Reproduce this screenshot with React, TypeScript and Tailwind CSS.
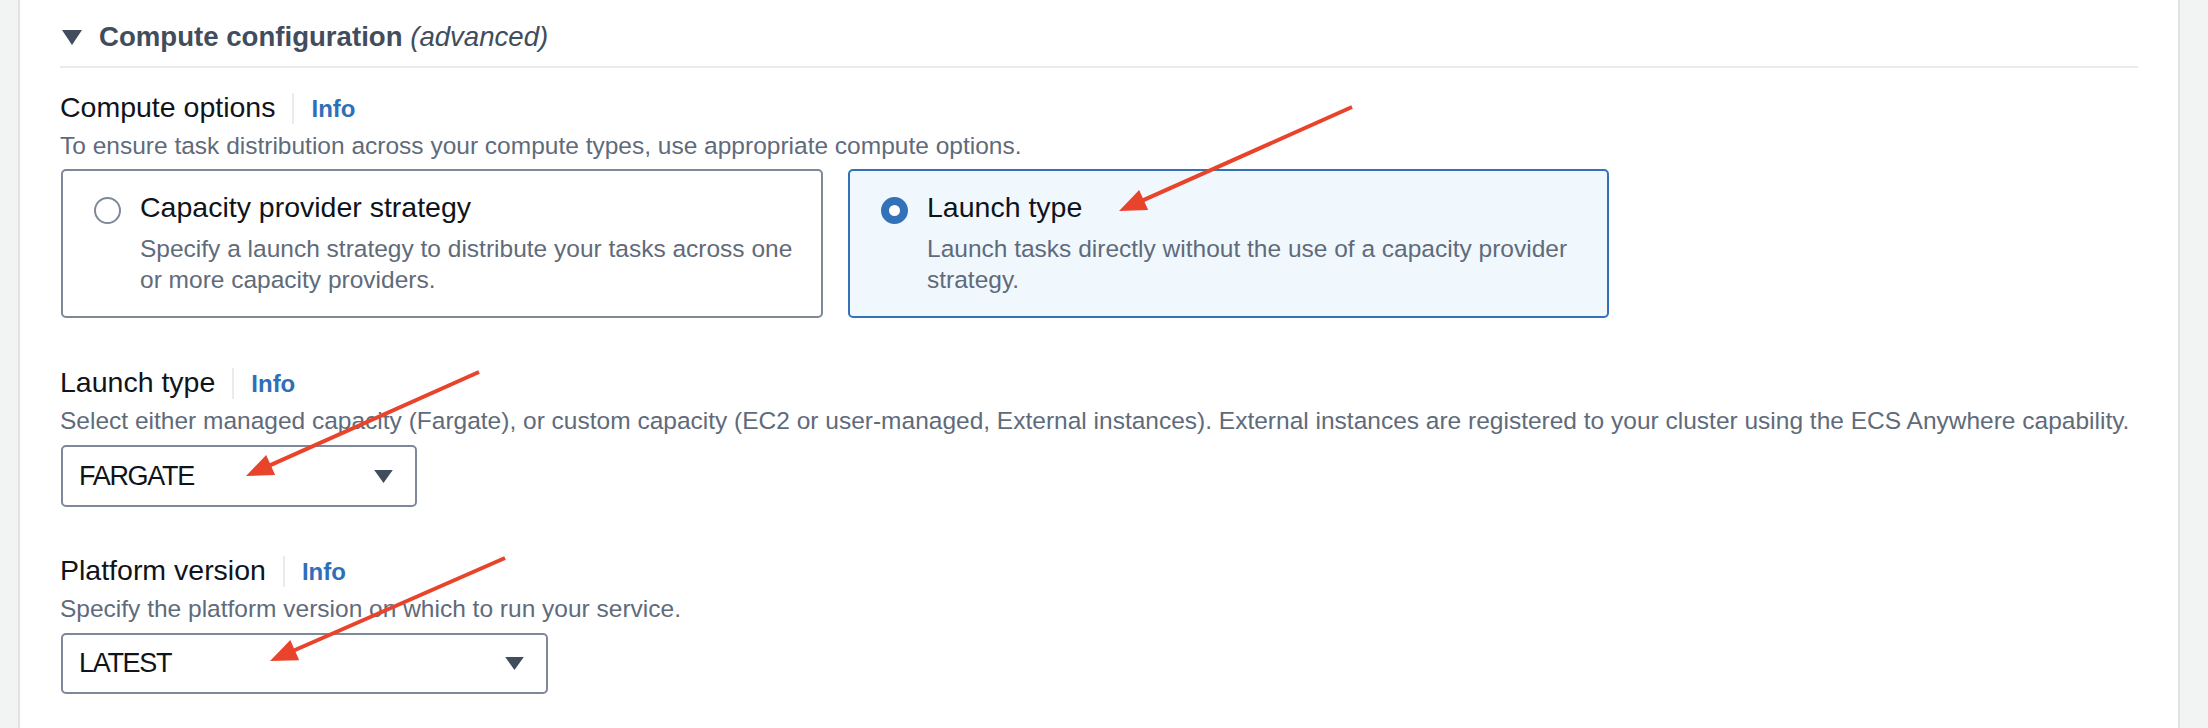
import React from 'react';

type Pt = [number, number];

// red annotation arrows drawn over the screenshot
const arrows: { from: Pt; to: Pt }[] = [
  { from: [1352, 107], to: [1119, 211] },
  { from: [479, 372], to: [246, 476] },
  { from: [505, 558], to: [270, 661] },
];

const Arrow: React.FC<{ from: Pt; to: Pt }> = ({ from, to }) => {
  const dx = to[0] - from[0];
  const dy = to[1] - from[1];
  const len = Math.hypot(dx, dy);
  const ux = dx / len;
  const uy = dy / len;
  const headLen = 27;
  const half = 11;
  const bx = to[0] - ux * headLen;
  const by = to[1] - uy * headLen;
  const p1 = `${bx - uy * half},${by + ux * half}`;
  const p2 = `${bx + uy * half},${by - ux * half}`;
  return (
    <g>
      <line
        x1={from[0]}
        y1={from[1]}
        x2={bx + ux * 4}
        y2={by + uy * 4}
        stroke="#e8432b"
        strokeWidth={4}
        strokeLinecap="butt"
      />
      <polygon points={`${to[0]},${to[1]} ${p1} ${p2}`} fill="#e8432b" />
    </g>
  );
};

const Caret: React.FC<{ className?: string }> = ({ className }) => (
  <svg viewBox="0 0 20 14" className={className} aria-hidden="true">
    <path d="M0 0 H20 L10 14 Z" fill="#414d5c" />
  </svg>
);

const FieldLabel: React.FC<{ label: string; description: string }> = ({ label, description }) => (
  <>
    <div className="flex items-baseline">
      <span className="text-[28.5px] leading-[36px] text-[#0f141a]">{label}</span>
      <span className="mx-[17px] h-[31px] w-[2px] self-center bg-[#e9ebed]" />
      <span className="text-[24px] font-bold leading-[36px] text-[#2f6fb8]">Info</span>
    </div>
    <p className="mt-[3px] text-[24.5px] leading-[31px] text-[#5f6b7a]">{description}</p>
  </>
);

const OptionCard: React.FC<{ title: string; text: string; checked?: boolean }> = ({ title, text, checked }) => (
  <div
    className={
      checked
        ? 'flex w-[761px] gap-[19px] rounded-[5px] border-2 border-[#3372b8] bg-[#f1f8fd] pl-[31px] pr-[28px] pt-[18px] pb-[21px]'
        : 'flex w-[762px] gap-[19px] rounded-[5px] border-2 border-[#7d8998] bg-white pl-[31px] pr-[22px] pt-[18px] pb-[21px]'
    }
  >
    {checked ? (
      <span className="mt-[8px] h-[27px] w-[27px] shrink-0 rounded-full border-[8.5px] border-[#3372b8] bg-white" />
    ) : (
      <span className="mt-[8px] h-[27px] w-[27px] shrink-0 rounded-full border-2 border-[#7d8998] bg-white" />
    )}
    <div className="min-w-0 flex-1">
      <div className="text-[28.5px] leading-[36px] text-[#0f141a]">{title}</div>
      <p className="mt-[8px] text-[24.5px] leading-[31px] text-[#5f6b7a]">{text}</p>
    </div>
  </div>
);

const SelectBox: React.FC<{ value: string; width: string; height: string }> = ({ value, width, height }) => (
  <div
    className={`ml-px mt-[9px] flex items-center justify-between rounded-[5px] border-2 border-[#7d8998] bg-white pl-[16px] pr-[22px] ${width} ${height}`}
  >
    <span className="text-[27px] leading-none tracking-[-1.3px] text-[#0f141a]">{value}</span>
    <Caret className="h-[13px] w-[19px]" />
  </div>
);

export default function App() {
  return (
    <div className="relative flex h-[728px] w-full overflow-hidden bg-[#f2f3f3] font-['Liberation_Sans',Arial,sans-serif]">
      <div className="w-[18px] shrink-0" />
      <div className="flex-1 border-x-2 border-[#e0e2e4] bg-white pl-[40px] pr-[40px] pt-[19px]">
        {/* Section header */}
        <div className="flex items-center">
          <svg viewBox="0 0 20 15" className="ml-[2px] h-[15px] w-[20px]" aria-hidden="true">
            <path d="M0 0 H20 L10 15 Z" fill="#414d5c" />
          </svg>
          <h2 className="ml-[17px] text-[27.6px] leading-[36px] text-[#414d5c]">
            <span className="font-bold">Compute configuration</span>{' '}
            <span className="italic">(advanced)</span>
          </h2>
        </div>
        <div className="mt-[11px] h-[2px] bg-[#e9ebed]" />

        {/* Compute options */}
        <div className="mt-[21px]">
          <FieldLabel
            label="Compute options"
            description="To ensure task distribution across your compute types, use appropriate compute options."
          />
          <div className="ml-px mt-[8px] flex gap-[25px]">
            <OptionCard
              title="Capacity provider strategy"
              text="Specify a launch strategy to distribute your tasks across one or more capacity providers."
            />
            <OptionCard
              checked
              title="Launch type"
              text="Launch tasks directly without the use of a capacity provider strategy."
            />
          </div>
        </div>

        {/* Launch type */}
        <div className="mt-[46px]">
          <FieldLabel
            label="Launch type"
            description="Select either managed capacity (Fargate), or custom capacity (EC2 or user-managed, External instances). External instances are registered to your cluster using the ECS Anywhere capability."
          />
          <SelectBox value="FARGATE" width="w-[356px]" height="h-[62px]" />
        </div>

        {/* Platform version */}
        <div className="mt-[45px]">
          <FieldLabel label="Platform version" description="Specify the platform version on which to run your service." />
          <SelectBox value="LATEST" width="w-[487px]" height="h-[61px]" />
        </div>
      </div>
      <div className="w-[28px] shrink-0" />

      <svg className="pointer-events-none absolute inset-0 h-full w-full" width={2208} height={728}>
        {arrows.map((a, i) => (
          <Arrow key={i} from={a.from} to={a.to} />
        ))}
      </svg>
    </div>
  );
}
